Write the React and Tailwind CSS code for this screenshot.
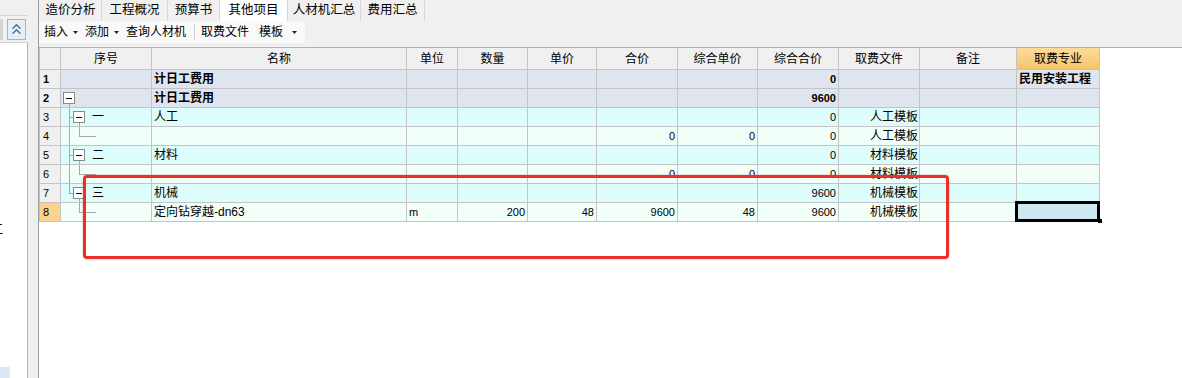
import { ChevronsUp } from 'lucide-react';

const COLS = [
  { k: 'rn', w: 'w-[21px]', t: '' },
  { k: 'xh', w: 'w-[91px]', t: '序号' },
  { k: 'mc', w: 'w-[255px]', t: '名称' },
  { k: 'dw', w: 'w-[51px]', t: '单位' },
  { k: 'sl', w: 'w-[70px]', t: '数量' },
  { k: 'dj', w: 'w-[69px]', t: '单价' },
  { k: 'hj', w: 'w-[81px]', t: '合价' },
  { k: 'zdj', w: 'w-[80px]', t: '综合单价' },
  { k: 'zhj', w: 'w-[81px]', t: '综合合价' },
  { k: 'qfwj', w: 'w-[81px]', t: '取费文件' },
  { k: 'bz', w: 'w-[97px]', t: '备注' },
  { k: 'qfzy', w: 'w-[83px]', t: '取费专业' },
];

const ROWS = [
  { n: 1, tone: 'head', bold: true, tree: null, mc: '计日工费用', zhj: '0', qfzy: '民用安装工程' },
  { n: 2, tone: 'head', bold: true, tree: 'root', mc: '计日工费用', zhj: '9600' },
  { n: 3, tone: 'cyan', tree: 'branch', label: '一', mc: '人工', zhj: '0', qfwj: '人工模板' },
  { n: 4, tone: 'mint', tree: 'leaf', hj: '0', zdj: '0', zhj: '0', qfwj: '人工模板' },
  { n: 5, tone: 'cyan', tree: 'branch', label: '二', mc: '材料', zhj: '0', qfwj: '材料模板' },
  { n: 6, tone: 'mint', tree: 'leaf', hj: '0', zdj: '0', zhj: '0', qfwj: '材料模板' },
  { n: 7, tone: 'cyan', tree: 'lastbranch', label: '三', mc: '机械', zhj: '9600', qfwj: '机械模板' },
  { n: 8, tone: 'mint', tree: 'lastleaf', sel: true, mc: '定向钻穿越-dn63', dw: 'm', sl: '200', dj: '48', hj: '9600', zdj: '48', zhj: '9600', qfwj: '机械模板' },
];

const TONE = {
  head: 'bg-[#dfe5ee]',
  cyan: 'bg-[#ddfcfc]',
  mint: 'bg-[#f2fff9]',
};

function Box({ x }) {
  return (
    <g>
      <rect x={x + 0.5} y={3.5} width={11} height={11} fill="#fff" stroke="#8a8a8a" />
      <line x1={x + 3} y1={9.5} x2={x + 9} y2={9.5} stroke="#000" />
    </g>
  );
}

function Tree({ kind, label }) {
  const g = '#a8a8a8';
  return (
    <div className="relative flex h-full w-full items-center">
      <svg width="91" height="18" className="absolute left-0 top-0">
        {kind === 'root' && (
          <>
            <Box x={2} />
            <line x1={8.5} y1={15} x2={8.5} y2={18} stroke={g} />
          </>
        )}
        {(kind === 'branch' || kind === 'lastbranch') && (
          <>
            <line x1={8.5} y1={0} x2={8.5} y2={kind === 'branch' ? 18 : 9.5} stroke={g} />
            <line x1={8} y1={9.5} x2={12} y2={9.5} stroke={g} />
            <Box x={12} />
            <line x1={18.5} y1={15} x2={18.5} y2={18} stroke={g} />
          </>
        )}
        {(kind === 'leaf' || kind === 'lastleaf') && (
          <>
            {kind === 'leaf' && <line x1={8.5} y1={0} x2={8.5} y2={18} stroke={g} />}
            <line x1={18.5} y1={0} x2={18.5} y2={9.5} stroke={g} />
            <line x1={18} y1={9.5} x2={35} y2={9.5} stroke={g} />
          </>
        )}
      </svg>
      {label && <span className="relative ml-[31px]">{label}</span>}
    </div>
  );
}

function Caret() {
  return (
    <svg width="5" height="3" className="ml-[5px]">
      <path d="M0 0h5L2.5 3z" fill="#222" />
    </svg>
  );
}

const TABS = [
  { l: '造价分析', w: 'w-[62px]' },
  { l: '工程概况', w: 'w-[66px]' },
  { l: '预算书', w: 'w-[52px]' },
  { l: '其他项目', w: 'w-[68px]', on: true },
  { l: '人材机汇总', w: 'w-[73px]' },
  { l: '费用汇总', w: 'w-[64px]' },
];

export default function App() {
  return (
    <div className="relative flex h-[378px] w-[1182px] overflow-hidden bg-white font-['Liberation_Sans','Noto_Sans_CJK_SC',sans-serif] text-[12px] text-black">
      {/* left pane (cut off) */}
      <div className="relative flex w-[28px] shrink-0 flex-col overflow-hidden bg-white">
        <div className="h-[15px] bg-[#f0f0f0]" />
        <div className="flex h-[28px] items-center border-y border-[#d4d4d4] border-r-0 bg-[#f0f0f0]">
          <div className="h-[21px] w-[3px] bg-[#d4d4d4]" />
          <div className="ml-[4px] flex h-[21px] w-[19px] items-center justify-center border border-[#a9b4c0] bg-[#e9eef3]">
            <ChevronsUp size={18} strokeWidth={2} color="#3a6ea8" />
          </div>
        </div>
        <div className="flex-1 border-r border-[#b4b4b4]">
          <div className="ml-[-10px] mt-[179px] text-[13px] leading-none">工</div>
        </div>
        <div className="absolute bottom-0 left-0 h-[11px] w-[10px] bg-[#dbe9f7]" />
      </div>
      {/* splitter */}
      <div className="w-[11px] shrink-0 border-r border-[#9c9c9c] bg-[#efefef]" />

      {/* main */}
      <div className="flex flex-1 flex-col">
        <div className="h-[48px] shrink-0 border-b border-[#b0b0b0] bg-[#f0f0f0]">
          <div className="flex h-[21px] items-stretch pl-[1px] text-[12.5px]">
            {TABS.map((t) => (
              <div key={t.l} className={`${t.w} flex items-center justify-center border-r border-[#d8d8d8] ${t.on ? 'bg-white' : ''}`}>
                {t.l}
              </div>
            ))}
          </div>
          <div className="flex h-[22px] w-[266px] items-center bg-[#f9f9f9] pl-[5px]">
            <span>插入</span><Caret />
            <span className="ml-[7px]">添加</span><Caret />
            <span className="ml-[7px]">查询人材机</span>
            <span className="ml-[8px] h-[16px] w-px bg-[#cfcfcf]" />
            <span className="ml-[6px]">取费文件</span>
            <span className="ml-[10px]">模板</span>
            <span className="ml-[4px]"><Caret /></span>
          </div>
        </div>

        {/* grid */}
        <div className="w-[1061px] border-l border-[#c4c4c4]">
          <div className="flex h-[22px] border-b border-[#c4c4c4] bg-[#f0f0f0]">
            {COLS.map((c) => (
              <div key={c.k}
                className={`${c.w} flex shrink-0 items-center justify-center border-r border-[#c4c4c4] ${c.k === 'qfzy' ? 'bg-gradient-to-b from-[#fcdc9c] to-[#f4c468]' : ''}`}>
                {c.t}
              </div>
            ))}
          </div>
          {ROWS.map((r) => (
            <div key={r.n} className={`flex h-[19px] border-b border-[#c4c4c4] ${TONE[r.tone]}`}>
              {COLS.map((c) => {
                const base = `${c.w} flex shrink-0 items-center border-r border-[#c4c4c4] overflow-hidden whitespace-nowrap`;
                if (c.k === 'rn') {
                  return (
                    <div key={c.k} className={`${base} pl-[3px] ${r.n === 8 ? 'bg-[#fcd28c]' : 'bg-[#f0f0f0]'} ${r.bold ? 'font-bold' : ''} text-[11px]`}>
                      {r.n}
                    </div>
                  );
                }
                if (c.k === 'xh') {
                  return <div key={c.k} className={base}>{r.tree && <Tree kind={r.tree} label={r.label} />}</div>;
                }
                const v = r[c.k];
                if (c.k === 'mc' || c.k === 'dw') {
                  return (
                    <div key={c.k} className={`${base} pl-[2px] ${r.bold ? 'font-bold' : ''} ${c.k === 'dw' ? 'text-[11px]' : ''}`}>{v}</div>
                  );
                }
                if (c.k === 'qfzy') {
                  return (
                    <div key={c.k} className={`${base} pl-[2px] font-bold ${r.sel ? 'bg-[#cfe7f3]' : ''}`}>{v}</div>
                  );
                }
                if (c.k === 'qfwj') {
                  return <div key={c.k} className={`${base} justify-end pr-[1px]`}>{v}</div>;
                }
                return (
                  <div key={c.k} className={`${base} justify-end pr-[2px] text-[11px] ${r.bold ? 'font-bold' : ''}`}>{v}</div>
                );
              })}
            </div>
          ))}
        </div>
      </div>

      {/* selected cell outline */}
      <div className="pointer-events-none absolute left-[1015px] top-[201px] h-[21px] w-[85px] border-[3px] border-black" />
      <div className="pointer-events-none absolute left-[1098px] top-[219px] h-[4px] w-[4px] bg-black" />

      {/* red annotation */}
      <div className="pointer-events-none absolute left-[83px] top-[175px] h-[84px] w-[866px] rounded-[4px] border-[3px] border-[#e8302a] shadow-[0_0_2px_rgba(232,48,42,0.5)]" />
    </div>
  );
}
